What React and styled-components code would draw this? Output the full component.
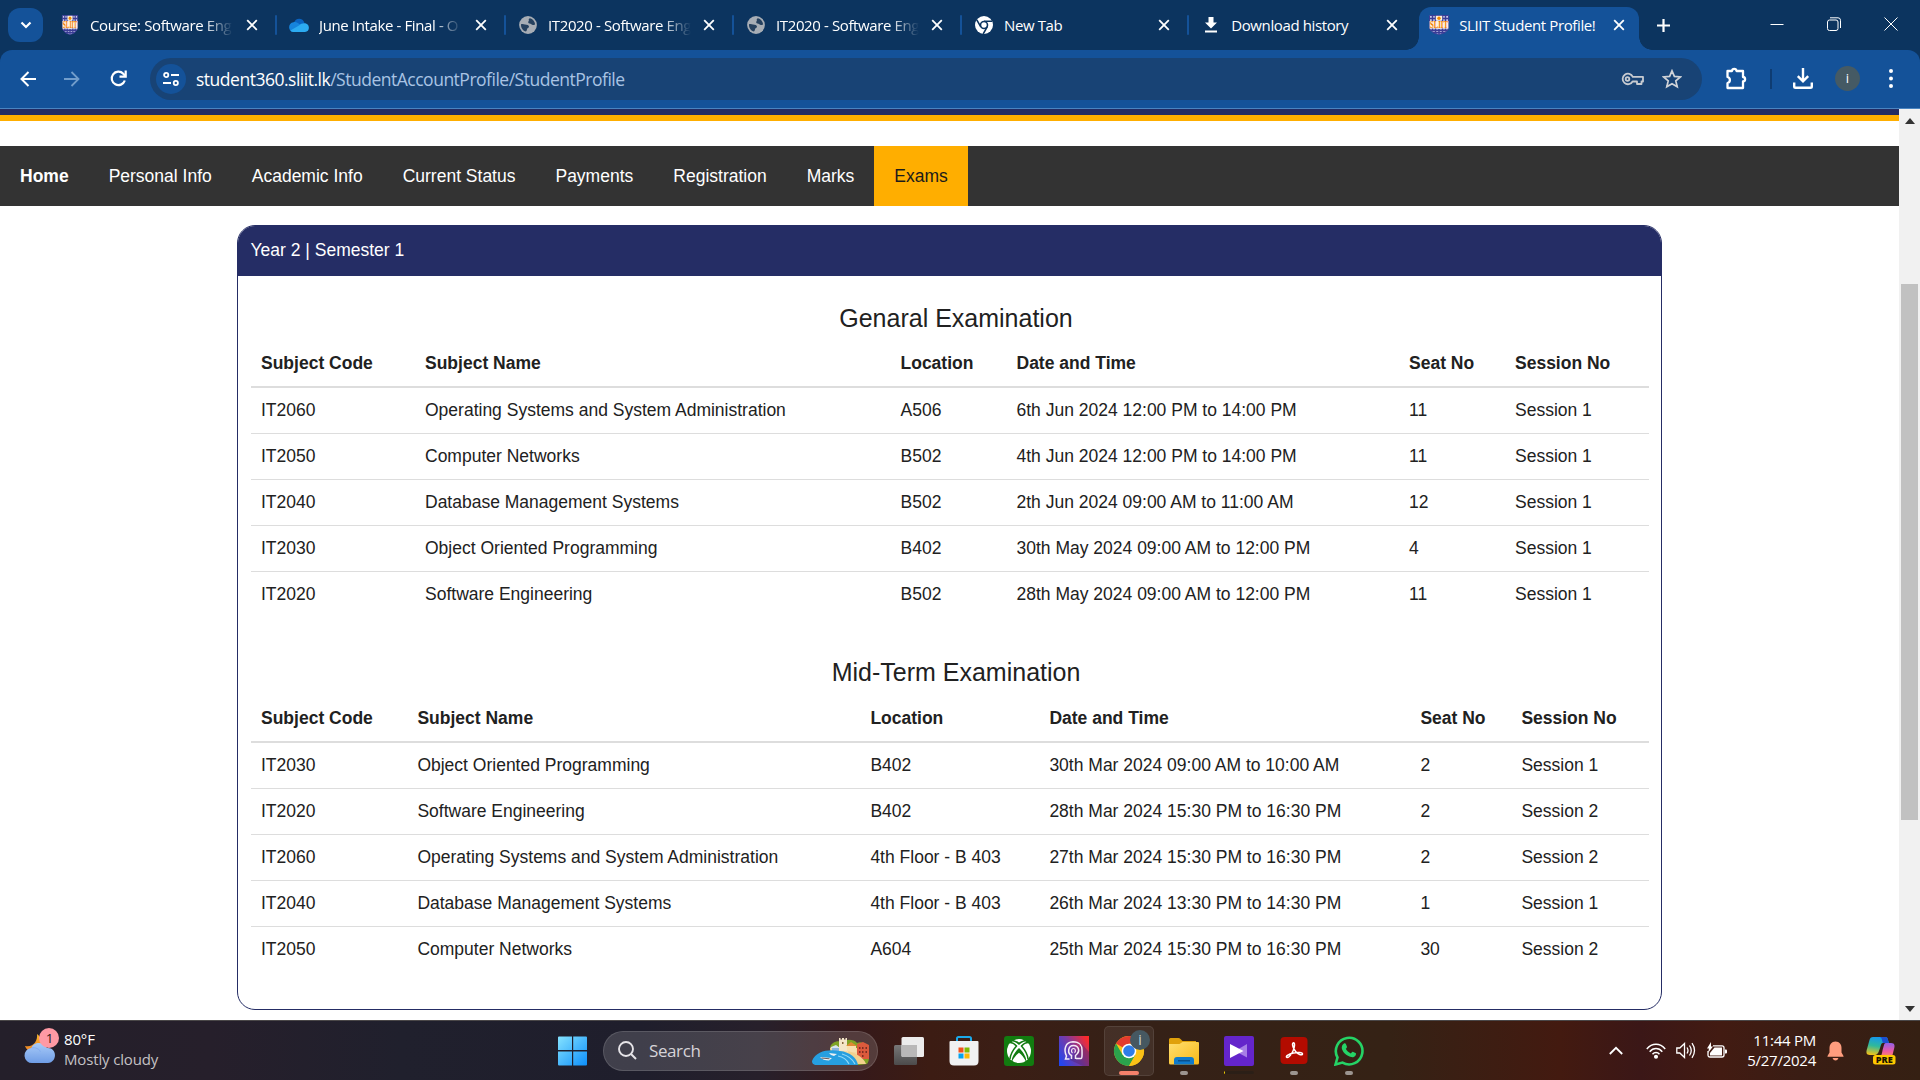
import React from "react";
import styled, { createGlobalStyle, css } from "styled-components";

const GlobalStyle = createGlobalStyle`
  *, *::before, *::after { box-sizing: border-box; }
  html, body { margin: 0; padding: 0; overflow: hidden; background: #fff; }
  svg { display: block; flex: none; }
`;

const ui = `"Open Sans", "Noto Sans", sans-serif`;
const arial = `"Liberation Sans", Arial, sans-serif`;

const Screen = styled.div`
  width: 1920px;
  height: 1080px;
  display: flex;
  flex-direction: column;
  overflow: hidden;
  font-family: ${ui};
`;

/* ---------- browser chrome ---------- */
const TabStrip = styled.header`
  height: 50px;
  flex: none;
  display: flex;
  align-items: flex-start;
  background: #0c345f;
  padding-left: 8px;
`;
const TabSearch = styled.button`
  width: 35px;
  height: 34px;
  margin: 8px 4px 0 0;
  padding: 0;
  border: 0;
  border-radius: 12px;
  background: #145299;
  display: flex;
  align-items: center;
  justify-content: center;
`;
const Tab = styled.div`
  width: ${(p) => (p.$active ? 220 : p.$w || 228.2)}px;
  height: ${(p) => (p.$active ? 43 : 50)}px;
  margin-top: ${(p) => (p.$active ? 7 : 0)}px;
  margin-left: ${(p) => (p.$active ? 3 : 0)}px;
  padding: 0 ${(p) => (p.$active ? 10 : 13)}px ${(p) => (p.$active ? 7 : 0)}px ${(p) => (p.$active ? 10 : 13)}px;
  flex: none;
  display: flex;
  align-items: center;
  position: relative;
  ${(p) =>
    p.$active &&
    css`
      background: #145299;
      border-radius: 12px 12px 0 0;
      &::before,
      &::after {
        content: "";
        position: absolute;
        bottom: 0;
        width: 13px;
        height: 13px;
      }
      &::before {
        left: -13px;
        background: radial-gradient(circle at 0 0, transparent 12.5px, #145299 13px);
      }
      &::after {
        right: -13px;
        background: radial-gradient(circle at 100% 0, transparent 12.5px, #145299 13px);
      }
    `}
`;
const TabRule = styled.i`
  width: 2px;
  height: 20px;
  border-radius: 1px;
  background: #145299;
  margin: 0 -14px 0 12px;
`;
const Favicon = styled.span`
  width: 20px;
  height: 20px;
  margin-right: 10px;
  flex: none;
  display: flex;
  align-items: center;
  justify-content: center;
`;
const TabTitle = styled.span`
  width: 150px;
  flex: none;
  white-space: nowrap;
  color: #fff;
  font-size: 15px;
  line-height: 24px;
  letter-spacing: -0.38px;
  ${(p) =>
    p.$fade &&
    css`
      mask-image: linear-gradient(90deg, #000 114px, transparent 143px);
    `}
`;
const TabClose = styled.span`
  width: 20px;
  margin-left: auto;
  margin-right: ${(p) => (p.$active ? 0 : 1)}px;
  display: flex;
  justify-content: center;
`;
const NewTab = styled.span`
  width: 48px;
  height: 50px;
  display: flex;
  align-items: center;
  justify-content: center;
`;
const WindowButtons = styled.div`
  margin-left: auto;
  margin-right: 1px;
  height: 48px;
  display: flex;
  align-items: center;
`;
const WindowButton = styled.span`
  width: 57px;
  display: flex;
  justify-content: center;
`;

const ToolbarBack = styled.div`
  height: 59px;
  flex: none;
  background: #0c345f;
`;
const Toolbar = styled.div`
  height: 59px;
  display: flex;
  align-items: center;
  padding: 0 0 1px 8px;
  background: #145299;
  border-radius: 12px 12px 0 0;
  border-bottom: 1px solid #4a84c0;
`;
const ToolButton = styled.span`
  width: ${(p) => p.$w}px;
  flex: none;
  display: flex;
  align-items: center;
  justify-content: center;
`;
const Omnibox = styled.div`
  width: 1552px;
  flex: none;
  height: 42px;
  margin-left: 11px;
  border-radius: 21px;
  background: #184375;
  display: flex;
  align-items: center;
  padding: 0 10px 0 6px;
`;
const SiteChip = styled.span`
  width: 30px;
  height: 30px;
  border-radius: 50%;
  background: #145299;
  display: flex;
  align-items: center;
  justify-content: center;
  margin-right: 10px;
`;
const Url = styled.span`
  flex: 1;
  color: #a9c3e4;
  font-size: 17.5px;
  letter-spacing: -0.49px;
  line-height: 26px;
  white-space: nowrap;
`;
const Host = styled.span`
  color: #fff;
`;
const ToolRule = styled.i`
  width: 1.5px;
  height: 20px;
  flex: none;
  background: #0e3c72;
`;
const Avatar = styled.span`
  width: 25px;
  height: 25px;
  border-radius: 50%;
  background: #455a64;
  color: #fff;
  font-size: 13px;
  line-height: 24px;
  text-align: center;
`;

/* ---------- web page ---------- */
const Viewport = styled.div`
  flex: 1;
  min-height: 0;
  display: flex;
`;
const Page = styled.main`
  width: 1899px;
  flex: none;
  background: #fff;
  font-family: ${arial};
  font-size: 17.5px;
  color: #212121;
`;
const Banner = styled.div`
  height: 12px;
  background: #232c63;
  border-bottom: 6px solid #ffae00;
`;
const Nav = styled.nav`
  margin-top: 25px;
  height: 60px;
  background: #333;
  display: flex;
`;
const NavItem = styled.a`
  padding: 0 20px;
  line-height: 60px;
  white-space: nowrap;
  color: ${(p) => (p.$active ? "#1b1b1b" : "#fff")};
  background: ${(p) => (p.$active ? "#ffae00" : "transparent")};
  font-weight: ${(p) => (p.$bold ? 700 : 400)};
`;
const Card = styled.section`
  width: 1425px;
  height: 785px;
  margin: 19px auto 0 237px;
  border: 1px solid #252d65;
  border-radius: 18px;
  overflow: hidden;
`;
const CardHead = styled.div`
  height: 50px;
  padding: 11px 12.5px 0;
  line-height: 26px;
  background: #252d65;
  color: #fff;
`;
const CardBody = styled.div`
  padding: 0 12.5px 0 13px;
`;
const Heading = styled.h4`
  margin: 0;
  padding: ${(p) => p.$top}px 0 ${(p) => p.$bottom}px 12.5px;
  font-size: 25px;
  line-height: 30px;
  font-weight: 400;
  text-align: center;
`;
const Table = styled.table`
  width: 1397.5px;
  table-layout: fixed;
  border-collapse: separate;
  border-spacing: 0;
`;
const Col = styled.col`
  width: ${(p) => p.$w};
`;
const Th = styled.th`
  height: 47px;
  padding: 0 10px;
  border-bottom: 2px solid #ddd;
  text-align: left;
  font-weight: 700;
  white-space: nowrap;
`;
const Tr = styled.tr`
  & + & > td {
    border-top: 1px solid #ddd;
    height: 46px;
  }
`;
const Td = styled.td`
  height: 45px;
  padding: 0 10px;
  white-space: nowrap;
`;

const ScrollBar = styled.div`
  width: 21px;
  height: 911px;
  background: #f1f1f1;
  display: flex;
  flex-direction: column;
  align-items: center;
  justify-content: space-between;
  padding: 9px 0 8px;
`;
const ScrollTrack = styled.div`
  flex: 1;
  padding-top: 160px;
`;
const ScrollThumb = styled.div`
  width: 17px;
  height: 536px;
  background: #c1c1c1;
`;

/* ---------- taskbar ---------- */
const Taskbar = styled.footer`
  height: 60px;
  flex: none;
  display: flex;
  border-top: 1px solid #4a4748;
  background: linear-gradient(90deg, #241f2a 0, #261f2b 210px, #20202d 400px, #1f1e2c 640px, #27202b 760px, #35191b 850px, #3c1c13 930px, #3b1e15 1000px, #352117 1140px, #352215 1390px, #431a10 1560px, #3b1717 1640px, #421b12 1720px, #3a1d14 1800px, #352013 1920px);
`;
const Weather = styled.div`
  width: 558px;
  padding: 6px 0 0 24px;
  display: flex;
`;
const WeatherText = styled.div`
  padding-left: 4px;
  padding-top: 2px;
  font-size: 15px;
  line-height: 20px;
  letter-spacing: -0.15px;
  color: #fff;
`;
const Muted = styled.div`
  color: #c4c1c4;
`;
const Dock = styled.div`
  display: flex;
  align-items: center;
`;
const SearchBox = styled.div`
  width: 275px;
  height: 40px;
  margin: 0 6px 0 15px;
  padding: 0 6px 0 14px;
  border-radius: 20px;
  border: 1px solid rgba(255, 255, 255, 0.13);
  background: rgba(255, 255, 255, 0.15);
  display: flex;
  align-items: center;
`;
const SearchLabel = styled.span`
  flex: 1;
  padding-left: 12px;
  font-size: 17px;
  letter-spacing: -0.4px;
  color: #d6d3d8;
`;
const DockApp = styled.div`
  width: 50px;
  height: 50px;
  margin-right: 5px;
  padding-top: 9px;
  border-radius: 5px;
  border: 1px solid ${(p) => (p.$active ? "rgba(255,255,255,.09)" : "transparent")};
  background: ${(p) => (p.$active ? "rgba(255,255,255,.07)" : "transparent")};
  display: flex;
  flex-direction: column;
  align-items: center;
`;
const IconSlot = styled.div`
  height: 30px;
  display: flex;
  align-items: center;
`;
const ChromeSlot = styled(IconSlot)`
  align-items: flex-end;
  margin-left: 6px;
`;
const Running = styled.i`
  width: ${(p) => (p.$kind === "active" ? 20 : p.$kind === "progress" ? 30 : 8)}px;
  height: ${(p) => (p.$kind === "progress" ? 3 : 4)}px;
  margin-top: 5px;
  border-radius: 2px;
  background: ${(p) =>
    p.$kind === "active" ? "#f5816b" : p.$kind === "progress" ? "linear-gradient(90deg,#ffd900 1px,#2b1f17 1px)" : "#9c9590"};
`;
const Tray = styled.div`
  margin-left: auto;
  display: flex;
  align-items: center;
  padding-right: 12px;
`;
const TrayIcon = styled.span`
  width: ${(p) => p.$w}px;
  display: flex;
  justify-content: center;
`;
const Clock = styled.div`
  width: 83px;
  margin-top: -2px;
  text-align: right;
  color: #fff;
  font-size: 15px;
  line-height: 20px;
  letter-spacing: -0.25px;
  white-space: nowrap;
`;

/* ---------- icons ---------- */
const X = () => (
  <svg width="12" height="12" viewBox="0 0 12 12" stroke="#fff" strokeWidth="1.8">
    <path d="M1.2 1.2l9.6 9.6M10.8 1.2l-9.6 9.6" />
  </svg>
);
const Shield = ({ width = 20 }) => (
  <svg width={width} height="20" viewBox="0 0 20 20" preserveAspectRatio="none" overflow="visible">
    <path d="M.5.5h19V12c0 4.500-5 6.500-9.500 7.500C5.500 18.500.5 16.500.5 12z" fill="#c9cbe8" stroke="#3d3f99" />
    <path d="M3.500.5v16M6.500.5v18M13.500.5v18M16.500.5v16M.5 3.500h19M1.500 15.200h17M4 17.500h12M10 14v5" stroke="#3b3c96" strokeWidth="1.500" />
    <path d="M6.800.8h6.400v4.400H6.800z" fill="#fff4dc" />
    <circle cx="10" cy="3.200" r="1.700" fill="#f08a00" />
    <path d="M.6 6h18.800v7.500H.6z" fill="#fff1df" />
    <text x="1" y="13" fontFamily="Liberation Serif" fontWeight="700" fontSize="9.500" fill="#f07d00" textLength="18" lengthAdjust="spacingAndGlyphs">SLIIT</text>
  </svg>
);
const OneDrive = () => (
  <svg width="20" height="14" viewBox="0 0 20 14">
    <path d="M5 5C6-.5 14-1 15.500 5l-3 5-9-1z" fill="#0a63c1" />
    <path d="M4.500 4.200C7 3.500 9 5 13 8l-9 6C-1.500 13-1 4.500 4.500 4.200z" fill="#1684dc" />
    <path d="M15.300 5.200c6 0 6 8.600.7 8.800H4.200c-1.200 0-2.200-.6-2.800-1.400L10 7.500c1.500-1.500 3-2.300 5.300-2.300z" fill="#2cabf1" />
  </svg>
);
const Globe = () => (
  <svg width="18" height="18" viewBox="0 0 18 18">
    <circle cx="9" cy="9" r="8.900" fill="#a7adb5" />
    <path d="M11 2.200c2.800.7 4.800 3 5.100 6-1.300 1.300-3.300 1-4-.2-.6-1-2.600-.2-2.900-1.600-.2-1 1-1.300.6-2.300-.3-.8.200-1.800 1.200-1.900z" fill="#26415f" />
    <path d="M2 8.200c2-.5 3 .2 4 .3 2 .1 4 .8 4 2.300 0 1.300-1.500 1-1.800 2-.3.800-.2 1.700-1.200 2.800C4 14.800 1.800 12 2 8.200z" fill="#26415f" />
  </svg>
);
const ChromeMono = () => (
  <svg width="18" height="18" viewBox="0 0 18 18">
    <circle cx="9" cy="9" r="9" fill="#fff" />
    <circle cx="9" cy="9" r="3.500" fill="none" stroke="#0c345f" strokeWidth="1.600" />
    <path d="M9 5.300h8M5.800 10.900l-4-7M12.200 10.900l-4 7" stroke="#0c345f" strokeWidth="1.600" />
  </svg>
);
const DownloadFill = () => (
  <svg width="14" height="16" viewBox="0 0 14 16" fill="#fff">
    <path d="M4.500 0h5v5.500H13l-6 6-6-6h3.500zM1 13.500h12v2H1z" />
  </svg>
);

const tabs = [
  { title: "Course: Software Eng", icon: <Shield width={16} />, fade: true, w: 229 },
  { title: "June Intake - Final - O", icon: <OneDrive />, fade: true, w: 229 },
  { title: "IT2020 - Software Eng", icon: <Globe />, fade: true, w: 228 },
  { title: "IT2020 - Software Eng", icon: <Globe />, fade: true, w: 228 },
  { title: "New Tab", icon: <ChromeMono />, w: 227.2 },
  { title: "Download history", icon: <DownloadFill />, w: 228, last: true },
];

const navItems = ["Home", "Personal Info", "Academic Info", "Current Status", "Payments", "Registration", "Marks", "Exams"];
const columns = ["Subject Code", "Subject Name", "Location", "Date and Time", "Seat No", "Session No"];
const general = {
  title: "Genaral Examination",
  top: 27,
  bottom: 8,
  widths: ["164px", "475.5px", "116px", "392.5px", "106px", "auto"],
  rows: [
    ["IT2060", "Operating Systems and System Administration", "A506", "6th Jun 2024 12:00 PM to 14:00 PM", "11", "Session 1"],
    ["IT2050", "Computer Networks", "B502", "4th Jun 2024 12:00 PM to 14:00 PM", "11", "Session 1"],
    ["IT2040", "Database Management Systems", "B502", "2th Jun 2024 09:00 AM to 11:00 AM", "12", "Session 1"],
    ["IT2030", "Object Oriented Programming", "B402", "30th May 2024 09:00 AM to 12:00 PM", "4", "Session 1"],
    ["IT2020", "Software Engineering", "B502", "28th May 2024 09:00 AM to 12:00 PM", "11", "Session 1"],
  ],
};
const midTerm = {
  title: "Mid-Term Examination",
  top: 40,
  bottom: 9,
  widths: ["156.4px", "453px", "179px", "371px", "101px", "auto"],
  rows: [
    ["IT2030", "Object Oriented Programming", "B402", "30th Mar 2024 09:00 AM to 10:00 AM", "2", "Session 1"],
    ["IT2020", "Software Engineering", "B402", "28th Mar 2024 15:30 PM to 16:30 PM", "2", "Session 2"],
    ["IT2060", "Operating Systems and System Administration", "4th Floor - B 403", "27th Mar 2024 15:30 PM to 16:30 PM", "2", "Session 2"],
    ["IT2040", "Database Management Systems", "4th Floor - B 403", "26th Mar 2024 13:30 PM to 14:30 PM", "1", "Session 1"],
    ["IT2050", "Computer Networks", "A604", "25th Mar 2024 15:30 PM to 16:30 PM", "30", "Session 2"],
  ],
};

function ExamTable({ data }) {
  return (
    <>
      <Heading $top={data.top} $bottom={data.bottom}>{data.title}</Heading>
      <Table>
        <colgroup>{data.widths.map((w, i) => <Col key={i} $w={w} />)}</colgroup>
        <thead>
          <tr>{columns.map((c) => <Th key={c}>{c}</Th>)}</tr>
        </thead>
        <tbody>
          {data.rows.map((r) => (
            <Tr key={r[0]}>{r.map((c, i) => <Td key={i}>{c}</Td>)}</Tr>
          ))}
        </tbody>
      </Table>
    </>
  );
}

/* taskbar icons */
const WeatherIcon = () => (
  <svg width="36" height="38" viewBox="0 0 36 38">
    <defs>
      <linearGradient id="cl" x1="0" y1="0" x2="0" y2="1"><stop offset="0" stopColor="#a9cbf8" /><stop offset="1" stopColor="#6f9de6" /></linearGradient>
      <linearGradient id="mn" x1="0" y1="0" x2="0" y2="1"><stop offset="0" stopColor="#fbb92e" /><stop offset="1" stopColor="#ee7d1e" /></linearGradient>
    </defs>
    <path d="M13 7c1 7-4 14-12 12 2 6 9 8 14 4 4-4 4-12-2-16z" fill="url(#mn)" />
    <path d="M8.500 36a7.500 7.500 0 0 1-1-15C9 15 20 14 23 21c10-1 11 14 1 15z" fill="url(#cl)" />
    <path d="M7.500 21c4-1 8 1 9 4" stroke="#86aef0" fill="none" />
    <circle cx="25" cy="11" r="10" fill="#ff99a4" />
    <text x="25.500" y="16" fontFamily="Open Sans" fontSize="13.500" textAnchor="middle" fill="#2c1a20">1</text>
  </svg>
);
const WinLogo = () => (
  <svg width="30" height="30" viewBox="0 0 30 30">
    <defs><linearGradient id="win" gradientUnits="userSpaceOnUse" x1="0" y1="0" x2="30" y2="30"><stop offset="0" stopColor="#86e3ff" /><stop offset="1" stopColor="#0a8dfa" /></linearGradient></defs>
    <path d="M0 1.500Q0 .5 1 .5h13V14H0zM15.200.5H28q1 0 1 1V14H15.200zM0 15.500h14v14H1q-1 0-1-1zM15.200 15.500H29v13q0 1-1 1H15.200z" fill="url(#win)" />
  </svg>
);
const Coast = () => (
  <svg width="59" height="28" viewBox="0 0 59 28">
    <path d="M18 12c0-7 8-9 12-7 4-3 12-3 15 1 5-2 8 1 9 4 4 4 4 14 1 17l-8 1H22z" fill="#7fa325" />
    <path d="M18 11c4-2 8-2 10 0h18v12H20z" fill="#f3d9a2" />
    <path d="M19 10l5-2 4 3h-9z" fill="#d9e3ee" /><path d="M20 11h7v4h-7z" fill="#8fb4dc" />
    <path d="M27 1h1.500v1.500h1.500V1h2v1.500h1.500V1H35v13h-8z" fill="#f4e6c8" /><path d="M30 5h1.500v2H30z" fill="#8a6a3f" />
    <path d="M34 9l5-4 6 4z" fill="#e08a34" /><path d="M35 9h9v6h-9z" fill="#f7dfae" />
    <path d="M45 7l6-2 6 3v14H45z" fill="#dc5a3c" />
    <path d="M47 10h1.500v2H47zM50 10h1.500v2H50zM53.500 10H55v2h-1.500zM47 14h1.500v2H47zM50 14h1.500v2H50zM53.500 14H55v2h-1.500zM50 18h1.500v2H50z" fill="#7d2d22" />
    <path d="M36 14c8 2 16 7 18 13H40z" fill="#f2d18d" />
    <path d="M0 24C4 14 16 12 28 14c10 1 17 7 18 14H5C1 28 0 26 0 24z" fill="#269fe0" />
    <path d="M30 17c7 2 11 6 13 10M26 19c6 1 9 4 11 8" stroke="#8fd8f8" strokeWidth="1.200" fill="none" />
    <path d="M8 20l12 1-3 2.500q-6 0-9-3.500zM17 16l8 1-3 2q-3 0-5-3z" fill="#eef2f5" />
    <path d="M9.500 21l8 .8" stroke="#6c5b58" />
  </svg>
);
const TaskView = () => (
  <svg width="30" height="28" viewBox="0 0 30 28">
    <defs><linearGradient id="tv" x1="0" y1="0" x2="0" y2="1"><stop offset="0" stopColor="#777" /><stop offset="1" stopColor="#4c4b4b" /></linearGradient></defs>
    <rect x="0" y="8" width="23" height="20" rx="1.500" fill="url(#tv)" />
    <rect x="7.500" y="0" width="22.500" height="20" rx="1.500" fill="#ececec" />
    <path d="M7.500 8H23v12H9q-1.500 0-1.500-1.500z" fill="#b9b8b8" />
  </svg>
);
const Store = () => (
  <svg width="30" height="30" viewBox="0 0 30 30">
    <path d="M8 6V2.500Q8 1 9.500 1h11Q22 1 22 2.500V6" fill="none" stroke="#1ba9ea" strokeWidth="2" />
    <path d="M.5 6q0-1 1-1h27q1 0 1 1v19q0 4.500-4.500 4.500H5Q.5 29.500.5 25z" fill="#f1f1f2" />
    <path d="M9.500 11.500h5v5h-5z" fill="#f1511b" /><path d="M15.500 11.500h5v5h-5z" fill="#80bb03" /><path d="M9.500 17.500h5v5h-5z" fill="#05a3ee" /><path d="M15.500 17.500h5v5h-5z" fill="#fbb909" />
  </svg>
);
const Xbox = () => (
  <svg width="30" height="30" viewBox="0 0 30 30">
    <rect width="30" height="30" rx="3" fill="#127c10" />
    <circle cx="15" cy="15" r="12" fill="#fff" />
    <path d="M6.500 6.500C8.500 4.500 11.500 6 15 9c3.500-3 6.500-4.500 8.500-2.500L25 5 20 1H10L5 5z" fill="#127c10" />
    <path d="M8 25.500C7 22 11 15.500 15 12c4 3.500 8 10 7 13.500-2-4-4.500-7-7-8.800-2.500 1.800-5 4.800-7 8.800z" fill="#127c10" />
    <path d="M6 6.500c2.500 0 5 1.800 6.500 3.600C9.500 13.500 6.500 18 6 23M24 6.500c-2.500 0-5 1.800-6.500 3.600 3 3.400 6 7.900 6.500 12.900" fill="none" stroke="#127c10" strokeWidth="1.500" />
    <path d="M10 4.200Q12.500 3 15 3t5 1.200Q17 5 15 6.500q-2-1.500-5-2.300z" fill="#fff" />
  </svg>
);
const HeadApp = () => (
  <svg width="30" height="30" viewBox="0 0 30 30">
    <defs><linearGradient id="hd" x1="0" y1=".8" x2="1" y2=".2"><stop offset="0" stopColor="#2446ee" /><stop offset=".5" stopColor="#7a3aa4" /><stop offset="1" stopColor="#fb2a2c" /></linearGradient></defs>
    <rect width="30" height="30" fill="url(#hd)" />
    <path d="M11 24l13 6h6V16l-7-8z" fill="#4a2370" opacity=".4" />
    <path d="M10.500 23h-4l1-3C4.500 14 6 6 14 5.800c7 0 9 4.700 9 8.200 0 2 .5 8.500-1 8.500h-5" fill="none" stroke="#f4eaf6" strokeWidth="1.500" />
    <path d="M12.500 23v-3.500C8 17 9 9.500 14.500 9.500c5.500 0 6.500 6 3.500 8.500l-1.500 1.500V23" fill="none" stroke="#f4eaf6" strokeWidth="1.500" />
    <path d="M13.500 17c-1.800-1.500-1-4.500 1-4.500s2.600 3 1 4.200" fill="none" stroke="#f4eaf6" strokeWidth="1.200" />
  </svg>
);
const Chrome = () => (
  <svg width="36" height="36" viewBox="0 0 36 36" overflow="visible">
    <g transform="translate(0 3)">
      <circle cx="15" cy="18" r="15" fill="#fbc116" />
      <path d="M15 18L2 10.500a15 15 0 0 1 26 0z" fill="#e33b2e" />
      <path d="M2 10.500A15 15 0 0 0 15 33l6.500-11.300L8.500 21.700z" fill="#2ba24c" />
      <path d="M15 10.500h13A15 15 0 0 1 15 33l6.500-11.300z" fill="#fbc116" />
      <circle cx="15" cy="18" r="7.300" fill="#fff" /><circle cx="15" cy="18" r="5.800" fill="#2f7de9" />
    </g>
    <circle cx="26" cy="10" r="10" fill="#465861" />
    <text x="26" y="15" fontFamily="Open Sans" fontSize="14" textAnchor="middle" fill="#d2dade">i</text>
  </svg>
);
const Folder = () => (
  <svg width="30" height="30" viewBox="0 0 30 30">
    <defs><linearGradient id="fd" x1="0" y1="0" x2="1" y2="1"><stop offset="0" stopColor="#ffdf70" /><stop offset="1" stopColor="#f9b916" /></linearGradient></defs>
    <path d="M0 3.500Q0 2 1.500 2h8q1 0 2 1l2 2H27v4H0z" fill="#e0a10b" />
    <path d="M0 8h10.500l3-2H29q1 0 1 1v20q0 1.500-1.500 1.500h-27Q0 28.500 0 27z" fill="url(#fd)" />
    <path d="M5 28.500V24q0-3 3-3h14q3 0 3 3v4.500z" fill="#0f7acb" /><path d="M9 24.800h12" stroke="#07467d" strokeWidth="1.200" />
  </svg>
);
const Clip = () => (
  <svg width="30" height="30" viewBox="0 0 30 30">
    <rect width="30" height="30" rx="2" fill="#6425cb" />
    <path d="M23 8v13.500L11 15z" fill="#a77fe6" /><path d="M6 8v14l13.500-7z" fill="#fff" />
  </svg>
);
const Acrobat = () => (
  <svg width="28" height="28" viewBox="0 0 28 28">
    <rect x=".5" y="0" width="27" height="27" rx="4" fill="#b30b00" />
    <path d="M13 6c2.500-1 1.500 5 0 8-1.500 3-4 7-6 6.500s1-3.500 6.500-4.500c4-.8 9-.7 9 1s-4 .8-6.500-2c-2-2-4.500-8-3-9z" fill="none" stroke="#fff" strokeWidth="1.500" />
  </svg>
);
const WhatsApp = () => (
  <svg width="30" height="30" viewBox="0 0 30 30">
    <path d="M1.500 28.500l2-7A13.300 13.300 0 1 1 8.500 26.600z" fill="none" stroke="#25d366" strokeWidth="2.600" />
    <path d="M10 7.500c1-.5 1.700 0 2 .8l1 2.400c.2.800-.8 1.600-1.200 2.100 1 2.200 2.800 3.700 5 4.600.6-.5 1.300-1.800 2-1.600l2.700 1.300c.7.400.6 1.200.2 2.100-.8 1.600-2.800 2.300-4.500 1.900-4.500-1-8-4.300-9.300-8-.5-2.200.3-4.600 2.100-5.600z" fill="#25d366" />
  </svg>
);

const apps = [
  { icon: <TaskView /> },
  { icon: <Store /> },
  { icon: <Xbox /> },
  { icon: <HeadApp /> },
  { icon: <Chrome />, run: "active" },
  { icon: <Folder />, run: "dot" },
  { icon: <Clip />, run: "progress" },
  { icon: <Acrobat />, run: "dot" },
  { icon: <WhatsApp />, run: "dot" },
];

const line = { fill: "none", stroke: "#fff", strokeWidth: 2.2 };

export default function App() {
  return (
    <Screen>
      <GlobalStyle />
      <TabStrip>
        <TabSearch>
          <svg width="12" height="8" viewBox="0 0 12 8" {...line}><path d="M1.500 1.500L6 6l4.500-4.500" /></svg>
        </TabSearch>
        {tabs.map((t, i) => (
          <Tab key={i} $w={t.w}>
            <Favicon>{t.icon}</Favicon>
            <TabTitle $fade={t.fade}>{t.title}</TabTitle>
            <TabClose><X /></TabClose>
            {!t.last && <TabRule />}
          </Tab>
        ))}
        <Tab $active>
          <Favicon><Shield /></Favicon>
          <TabTitle>SLIIT Student Profile!</TabTitle>
          <TabClose $active><X /></TabClose>
        </Tab>
        <NewTab>
          <svg width="13" height="13" viewBox="0 0 13 13" {...line}><path d="M6.500 0v13M0 6.500h13" /></svg>
        </NewTab>
        <WindowButtons>
          <WindowButton><svg width="14" height="14" viewBox="0 0 14 14" stroke="#fff" fill="none"><path d="M.5 7.500h13" /></svg></WindowButton>
          <WindowButton><svg width="14" height="14" viewBox="0 0 14 14" stroke="#fff" fill="none"><rect x=".5" y="3" width="10.500" height="10.500" rx="2" /><path d="M3 .8h8q2.500 0 2.500 2.500V11" /></svg></WindowButton>
          <WindowButton><svg width="14" height="14" viewBox="0 0 14 14" stroke="#fff" fill="none"><path d="M.5.5l13 13M13.500.5l-13 13" /></svg></WindowButton>
        </WindowButtons>
      </TabStrip>

      <ToolbarBack>
        <Toolbar>
          <ToolButton $w={39}><svg width="16" height="16" viewBox="0 0 16 16" {...line} strokeWidth="2"><path d="M16 8H2M8.500 1L1.500 8l7 7" /></svg></ToolButton>
          <ToolButton $w={50}><svg width="16" height="16" viewBox="0 0 16 16" {...line} strokeWidth="1.800" stroke="#729dcb"><path d="M0 8h14M7.500 1l7 7-7 7" /></svg></ToolButton>
          <ToolButton $w={42}><svg width="17" height="17" viewBox="0 0 17 17" {...line}><path d="M14.800 10.500a6.700 6.700 0 1 1-1.500-6.700l2.200 2.400" /><path d="M15.700.5v6.200H9.500" /></svg></ToolButton>
          <Omnibox>
            <SiteChip>
              <svg width="16" height="14" viewBox="0 0 16 14" {...line} strokeWidth="1.800"><circle cx="3.200" cy="3" r="2.100" /><path d="M8 3h8M0 11h8" /><circle cx="12.800" cy="11" r="2.100" /></svg>
            </SiteChip>
            <Url><Host>student360.sliit.lk</Host>/StudentAccountProfile/StudentProfile</Url>
            <ToolButton $w={40}>
              <svg width="23" height="14" viewBox="0 0 23 14" fill="none" stroke="#c7cbd1" strokeWidth="1.800"><path d="M11.800 4.800A5.300 5.300 0 1 0 11.600 9.500H16V12h4.500V9.500H22V4.800z" strokeLinejoin="round" /><circle cx="6.500" cy="7" r="1.800" /></svg>
            </ToolButton>
            <ToolButton $w={40}>
              <svg width="20" height="20" viewBox="0 0 20 20" fill="none" stroke="#d0d3d8" strokeWidth="1.700"><path d="M10 1.800l2.400 5.600 6 .5-4.600 4 1.400 5.900L10 14.700l-5.200 3.100 1.400-5.900-4.600-4 6-.5z" /></svg>
            </ToolButton>
          </Omnibox>
          <ToolButton $w={68}>
            <svg width="22" height="23" viewBox="0 0 22 23" {...line} strokeWidth="2.300"><path d="M2.500 4H7c.3-2.800 4.200-2.800 4.500 0H18v6c2.800.3 2.800 4.200 0 4.500V21H2.500v-5c3.200-.8 3.200-5.200 0-6z" strokeLinejoin="round" /></svg>
          </ToolButton>
          <ToolRule />
          <ToolButton $w={62}>
            <svg width="20" height="21" viewBox="0 0 20 21" {...line} strokeWidth="2.400"><path d="M10 0v13M4.800 8.200L10 13.400l5.200-5.200M1.200 14.500v4q0 1.300 1.300 1.300h15q1.300 0 1.300-1.300v-4" /></svg>
          </ToolButton>
          <ToolButton $w={28}><Avatar>i</Avatar></ToolButton>
          <ToolButton $w={58}>
            <svg width="4" height="19" viewBox="0 0 4 19" fill="#fff"><circle cx="2" cy="2" r="2" /><circle cx="2" cy="9.500" r="2" /><circle cx="2" cy="17" r="2" /></svg>
          </ToolButton>
        </Toolbar>
      </ToolbarBack>

      <Viewport>
        <Page>
          <Banner />
          <Nav>
            {navItems.map((n) => (
              <NavItem key={n} $bold={n === "Home"} $active={n === "Exams"}>{n}</NavItem>
            ))}
          </Nav>
          <Card>
            <CardHead>Year 2 | Semester 1</CardHead>
            <CardBody>
              <ExamTable data={general} />
              <ExamTable data={midTerm} />
            </CardBody>
          </Card>
        </Page>
        <ScrollBar>
          <svg width="10" height="6" viewBox="0 0 10 6"><path d="M0 6L5 0l5 6z" fill="#333" /></svg>
          <ScrollTrack><ScrollThumb /></ScrollTrack>
          <svg width="10" height="6" viewBox="0 0 10 6"><path d="M0 0l5 6 5-6z" fill="#333" /></svg>
        </ScrollBar>
      </Viewport>

      <Taskbar>
        <Weather>
          <WeatherIcon />
          <WeatherText>80°F<Muted>Mostly cloudy</Muted></WeatherText>
        </Weather>
        <Dock>
          <WinLogo />
          <SearchBox>
            <svg width="19" height="19" viewBox="0 0 19 19" {...line} stroke="#e6e4e8" strokeWidth="1.900"><circle cx="8" cy="8" r="7" /><path d="M13 13l5 5" /></svg>
            <SearchLabel>Search</SearchLabel>
            <Coast />
          </SearchBox>
          {apps.map((a, i) => {
            const Slot = a.run === "active" ? ChromeSlot : IconSlot;
            return (
              <DockApp key={i} $active={a.run === "active"}>
                <Slot>{a.icon}</Slot>
                {a.run && <Running $kind={a.run} />}
              </DockApp>
            );
          })}
        </Dock>
        <Tray>
          <TrayIcon $w={50}><svg width="14" height="9" viewBox="0 0 14 9" {...line} strokeWidth="1.800"><path d="M.8 8L7 1.800 13.200 8" /></svg></TrayIcon>
          <TrayIcon $w={30}>
            <svg width="20" height="16" viewBox="0 0 20 16" {...line} strokeWidth="1.500"><path d="M.8 6C6-.2 14-.2 19.200 6M3.700 8.700c3.500-4.200 9.100-4.200 12.600 0M6.500 11.300c2-2.300 5-2.300 7 0" /><circle cx="10" cy="13.700" r="1.300" fill="#fff" /></svg>
          </TrayIcon>
          <TrayIcon $w={30}>
            <svg width="20" height="17" viewBox="0 0 20 17" {...line} strokeWidth="1.300"><path d="M.8 6h3L8.500 1.500v14L3.800 11h-3zM11 5.500q2 3 0 6M13.500 3.500q3.500 5 0 10M16 1.200q5 7.300 0 14.600" /></svg>
          </TrayIcon>
          <TrayIcon $w={32}>
            <svg width="20" height="17" viewBox="0 0 20 17"><path d="M6 3.800h9q2 0 2 2V13q0 2-2 2H3q-2 0-2-2V9" fill="none" stroke="#fff" strokeWidth="1.300" /><path d="M7.500 5.500H15v8H3V11z" fill="#fff" /><path d="M18 7.500h1q1 0 1 1v2q0 1-1 1h-1z" fill="#fff" /><path d="M4 0L0 6.500h2L1 11l5-6.500H4z" fill="#fff" /></svg>
          </TrayIcon>
          <Clock>11:44 PM<br />5/27/2024</Clock>
          <TrayIcon $w={38}>
            <svg width="17" height="20" viewBox="0 0 17 20" fill="#ff9d7e"><path d="M8.500.5c4 0 6 3 6 6.500v4.500l2 3.500v.8H.5V15l2-3.500V7c0-3.500 2-6.500 6-6.500zM5.500 17h6q-1 2.500-3 2.500t-3-2.500z" /></svg>
          </TrayIcon>
          <TrayIcon $w={54}>
            <svg width="30" height="29" viewBox="0 0 30 29">
              <defs>
                <linearGradient id="ca" x1=".5" y1="0" x2=".3" y2="1"><stop offset="0" stopColor="#1597ee" /><stop offset=".5" stopColor="#2fb99b" /><stop offset="1" stopColor="#f2c21a" /></linearGradient>
                <linearGradient id="cb" x1="0" y1="0" x2="0" y2="1"><stop offset="0" stopColor="#9160e8" /><stop offset=".6" stopColor="#ef5ba2" /><stop offset="1" stopColor="#f98f5c" /></linearGradient>
              </defs>
              <path d="M7 1h12c3 0 2.500 2 4 6h-6c-2 0-2 2-3 5s-2 7-5 7H4c-4 0-4-3-3-6l2.500-9C4 2 5 1 7 1z" fill="url(#ca)" />
              <path d="M14 1h5c3 0 2.500 2 4 6h-6c-1.500-4-1-5-3-6z" fill="#1c4fd0" />
              <path d="M20 7h5c4 0 4 3 3 6l-2 8H13c3 0 3-5 4-8.500S18 7 20 7z" fill="url(#cb)" />
              <rect x="7" y="19" width="22.500" height="9.500" rx="2.500" fill="#ffc800" />
              <text x="9.800" y="26.700" fontFamily="Open Sans" fontSize="8.200" fontWeight="800" textLength="17" lengthAdjust="spacingAndGlyphs" fill="#1a1400">PRE</text>
            </svg>
          </TrayIcon>
        </Tray>
      </Taskbar>
    </Screen>
  );
}
